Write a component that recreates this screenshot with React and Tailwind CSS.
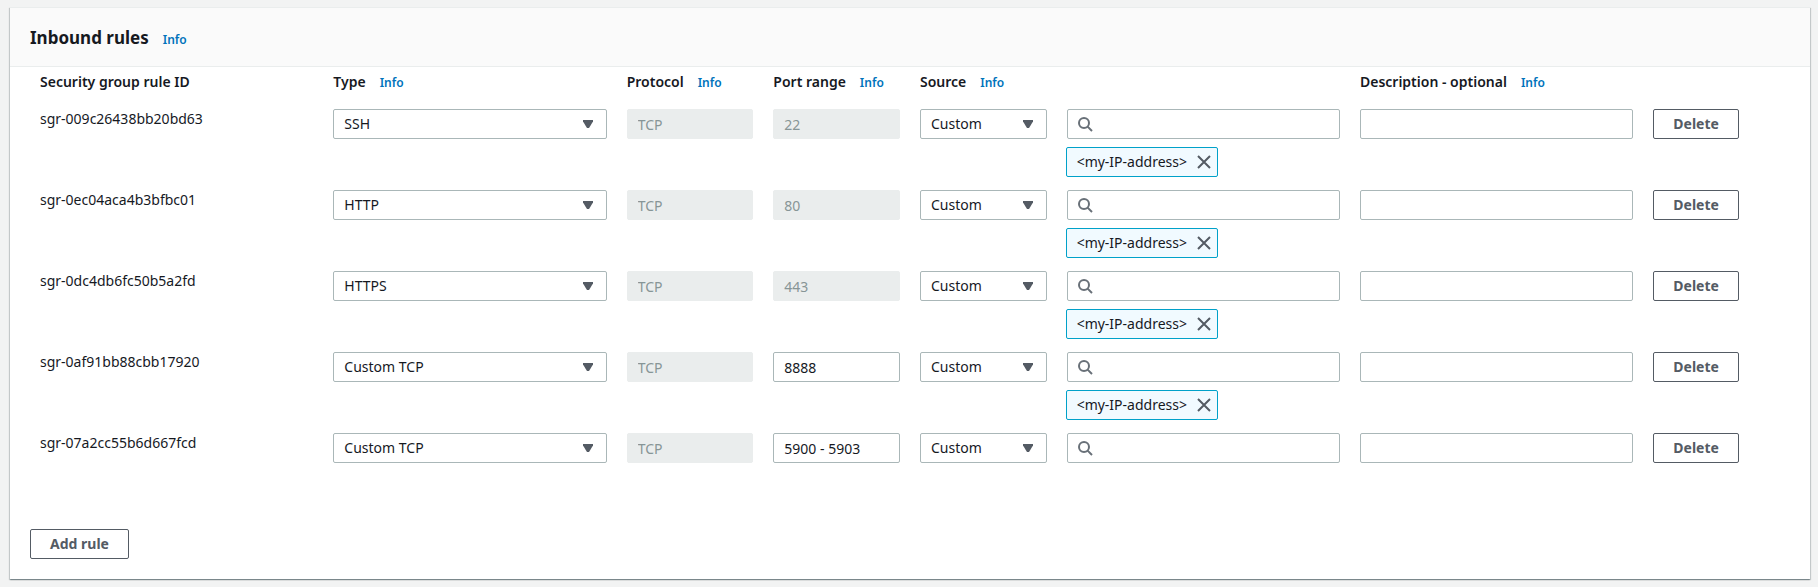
import React from "react";

const rules = [
  { id: "sgr-009c26438bb20bd63", type: "SSH", port: "22", fixed: true, chip: true },
  { id: "sgr-0ec04aca4b3bfbc01", type: "HTTP", port: "80", fixed: true, chip: true },
  { id: "sgr-0dc4db6fc50b5a2fd", type: "HTTPS", port: "443", fixed: true, chip: true },
  { id: "sgr-0af91bb88cbb17920", type: "Custom TCP", port: "8888", fixed: false, chip: true },
  { id: "sgr-07a2cc55b6d667fcd", type: "Custom TCP", port: "5900 - 5903", fixed: false, chip: false },
];

const field =
  "block h-[30px] w-full rounded-[2px] border border-[#aab7b8] bg-white px-2.5 text-[#16191f] disabled:border-[#eaeded] disabled:bg-[#eaeded] disabled:text-[#879596]";
const outlineButton =
  "h-[30px] rounded-[2px] border border-[#545b64] bg-white px-[19px] font-bold text-[#545b64]";

function Info() {
  return (
    <a href="#info" className="text-xs font-semibold text-[#0073bb]">
      Info
    </a>
  );
}

function Select({ label, options, value }) {
  return (
    <div className="relative">
      <select aria-label={label} defaultValue={value} className={`${field} appearance-none pr-8`}>
        {options.map((o) => (
          <option key={o}>{o}</option>
        ))}
      </select>
      <svg
        viewBox="0 0 10 8"
        className="pointer-events-none absolute top-[11px] right-[14px] h-2 w-[10px] fill-[#545b64]"
        aria-hidden="true"
      >
        <path d="M0 0h10v1.6L6 8H4L0 1.6z" />
      </svg>
    </div>
  );
}

function SearchBox({ label }) {
  return (
    <div className="relative">
      <input type="search" aria-label={label} className={`${field} pl-8`} />
      <svg
        viewBox="0 0 16 16"
        className="pointer-events-none absolute top-[7px] left-[10px] size-4 fill-none stroke-[#687078] stroke-2"
        aria-hidden="true"
      >
        <circle cx="7" cy="7" r="5" />
        <path d="M10.6 10.6L15 15" />
      </svg>
    </div>
  );
}

function Chip({ text }) {
  return (
    <div className="mt-2 -ml-px flex h-[30px] w-fit items-center gap-2.5 rounded-[2px] border border-[#00a1c9] bg-[#f1faff] pr-1.5 pl-2.5">
      <span className="whitespace-nowrap">{text}</span>
      <button type="button" aria-label={`Remove ${text}`}>
        <svg viewBox="0 0 14 14" className="block size-[14px] fill-none stroke-[#545b64] stroke-2">
          <path d="M1 1l12 12M13 1L1 13" />
        </svg>
      </button>
    </div>
  );
}

function Heading({ children, info }) {
  return (
    <th scope="col" className="h-[42px] px-2.5 pt-[5px] text-left align-top font-semibold whitespace-nowrap">
      <span className="flex items-baseline gap-3.5">
        {children}
        {info && <Info />}
      </span>
    </th>
  );
}

export default function App() {
  return (
    <div className="min-h-screen bg-[#f2f3f3] pt-[7px] pr-2 pb-2 pl-2.5 font-['Noto_Sans',sans-serif] text-sm leading-5 text-[#16191f]">
      <section className="border-t border-[#eaeded] bg-white shadow-[0_1px_1px_0_rgba(0,28,36,0.3),1px_1px_1px_0_rgba(0,28,36,0.15),-1px_1px_1px_0_rgba(0,28,36,0.15)]">
        <header className="flex h-[59px] items-center border-b border-[#eaeded] bg-[#fafafa] px-5 pt-0.5">
          <div className="flex items-baseline gap-3.5">
            <h2 className="text-[17px] leading-6 font-bold">Inbound rules</h2>
            <Info />
          </div>
        </header>
        <div className="px-5 pb-5">
          <table className="w-full table-fixed border-collapse">
            <colgroup>
              <col className="w-2/12" />
              <col className="w-2/12" />
              <col className="w-1/12" />
              <col className="w-1/12" />
              <col className="w-1/12" />
              <col className="w-2/12" />
              <col className="w-2/12" />
              <col className="w-1/12" />
            </colgroup>
            <thead>
              <tr>
                <Heading>Security group rule ID</Heading>
                <Heading info>Type</Heading>
                <Heading info>Protocol</Heading>
                <Heading info>Port range</Heading>
                <Heading info>Source</Heading>
                <td />
                <Heading info>Description - optional</Heading>
                <td />
              </tr>
            </thead>
            <tbody>
              {rules.map((r) => (
                <tr key={r.id} className="h-[81px] align-top">
                  <td className="px-2.5">{r.id}</td>
                  <td className="px-2.5">
                    <Select label="Type" value={r.type} options={["SSH", "HTTP", "HTTPS", "Custom TCP"]} />
                  </td>
                  <td className="px-2.5">
                    <input aria-label="Protocol" defaultValue="TCP" disabled className={field} />
                  </td>
                  <td className="px-2.5">
                    <input aria-label="Port range" defaultValue={r.port} disabled={r.fixed} className={field} />
                  </td>
                  <td className="px-2.5">
                    <Select label="Source" value="Custom" options={["Custom", "Anywhere", "My IP"]} />
                  </td>
                  <td className="px-2.5">
                    <SearchBox label="Search source" />
                    {r.chip && <Chip text="<my-IP-address>" />}
                  </td>
                  <td className="px-2.5">
                    <input type="text" aria-label="Description" className={field} />
                  </td>
                  <td className="px-2.5">
                    <button type="button" className={outlineButton}>
                      Delete
                    </button>
                  </td>
                </tr>
              ))}
            </tbody>
          </table>
          <button type="button" className={`${outlineButton} mt-[15px]`}>
            Add rule
          </button>
        </div>
      </section>
    </div>
  );
}
